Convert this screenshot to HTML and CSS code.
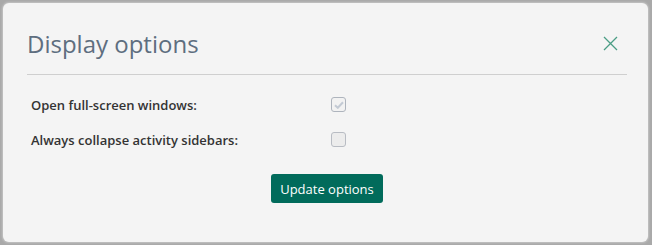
FILE: index.html
```html
<!DOCTYPE html>
<html>
<head>
<meta charset="utf-8">
<link rel="stylesheet" href="styles.css">
</head>
<body>
<div class="modal">
  <div class="header">
    <h2 class="title">Display options</h2>
    <button class="close" aria-label="Close">
      <svg width="15" height="15" viewBox="0 0 15 15"><path d="M1 1L14 14M14 1L1 14" stroke="#4a9d84" stroke-width="1.3" fill="none"/></svg>
    </button>
  </div>
  <div class="body">
    <div class="row">
      <label class="label">Open full-screen windows:</label>
      <span class="check checked">
        <svg width="10" height="8" viewBox="0 0 10 8"><path d="M1 4.2L3.8 6.8L9 1.2" stroke="#c3cad4" stroke-width="2" fill="none"/></svg>
      </span>
    </div>
    <div class="row">
      <label class="label">Always collapse activity sidebars:</label>
      <span class="check"></span>
    </div>
    <div class="actions">
      <button class="btn">Update options</button>
    </div>
  </div>
</div>
</body>
</html>
```
FILE: styles.css
```css
html, body {
  margin: 0;
  padding: 0;
}
body {
  background: #a9a9a9;
  width: 652px;
  height: 245px;
  padding: 3px 4px 3px 3px;
  box-sizing: border-box;
  font-family: "Open Sans", "Noto Sans", sans-serif;
}
.modal {
  height: 239px;
  background: #f4f4f4;
  border-radius: 6px;
  box-shadow: 0 0 2px 1px #c4c4c4;
  padding: 0 21px 0 24px;
  box-sizing: border-box;
}
.header {
  display: flex;
  align-items: center;
  justify-content: space-between;
  padding-top: 24px;
  padding-bottom: 14px;
  border-bottom: 1px solid #cfcfcf;
}
.title {
  margin: 0;
  font-size: 24px;
  line-height: 33px;
  font-weight: 400;
  color: #5e6e7f;
}
.close {
  border: 0;
  background: none;
  padding: 0;
  margin-right: 9px;
  width: 15px;
  height: 15px;
  display: flex;
}
.body {
  padding: 12px 0 0 4px;
}
.row {
  display: flex;
  align-items: center;
  height: 35px;
}
.label {
  width: 300px;
  font-size: 13px;
  font-weight: 600;
  color: #333;
}
.check {
  width: 13px;
  height: 13px;
  border: 1px solid #b8bcc3;
  border-radius: 3px;
  background: #ececec;
  display: flex;
  align-items: center;
  justify-content: center;
}
.check.checked {
  background: #f2f2f2;
  border-color: #aeb4bd;
}
.actions {
  display: flex;
  justify-content: center;
  padding-top: 17px;
}
.btn {
  width: 112px;
  height: 29px;
  border: 0;
  border-radius: 3px;
  background: #016b5b;
  color: #fff;
  font-family: "Open Sans", "Noto Sans", sans-serif;
  font-size: 13px;
  padding: 0;
  margin-left: -4px;
}
```
